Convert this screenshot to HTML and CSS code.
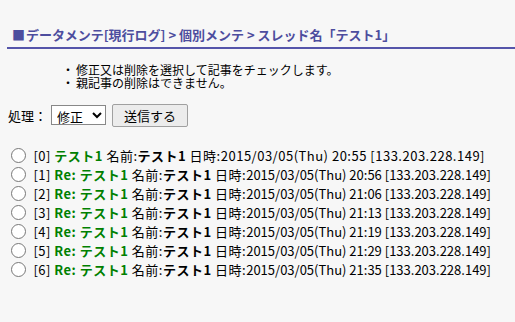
FILE: index.html
```html
<!DOCTYPE html>
<html lang="ja">
<head>
  <meta charset="UTF-8" />
  <title>データメンテ</title>
  <link rel="stylesheet" href="styles.css">
</head>
<body>
  <h1 class="title"><span class="mark">■</span>データメンテ[現行ログ] &gt; 個別メンテ &gt; スレッド名「テスト1」</h1>

  <ul class="notes">
    <li>修正又は削除を選択して記事をチェックします。</li>
    <li>親記事の削除はできません。</li>
  </ul>

  <form class="action-form">
    <div class="action-row">
      <label for="mode">処理：</label>
      <select id="mode" class="mode-select">
        <option>修正</option>
        <option>削除</option>
      </select>
      <button type="button" class="send-btn">送信する</button>
    </div>

    <div class="post-list">
      <label class="post parent"><input type="radio" name="no" value="0"> [0] <b class="subj">テスト1</b> 名前:<b>テスト1</b> 日時:<span class="date">2015/03/05(Thu) 20:55 [133.203.228.149]</span></label>
      <label class="post"><input type="radio" name="no" value="1"> [1] <b class="subj">Re: テスト1</b> 名前:<b>テスト1</b> 日時:<span class="date">2015/03/05(Thu) 20:56 [133.203.228.149]</span></label>
      <label class="post"><input type="radio" name="no" value="2"> [2] <b class="subj">Re: テスト1</b> 名前:<b>テスト1</b> 日時:<span class="date">2015/03/05(Thu) 21:06 [133.203.228.149]</span></label>
      <label class="post"><input type="radio" name="no" value="3"> [3] <b class="subj">Re: テスト1</b> 名前:<b>テスト1</b> 日時:<span class="date">2015/03/05(Thu) 21:13 [133.203.228.149]</span></label>
      <label class="post"><input type="radio" name="no" value="4"> [4] <b class="subj">Re: テスト1</b> 名前:<b>テスト1</b> 日時:<span class="date">2015/03/05(Thu) 21:19 [133.203.228.149]</span></label>
      <label class="post"><input type="radio" name="no" value="5"> [5] <b class="subj">Re: テスト1</b> 名前:<b>テスト1</b> 日時:<span class="date">2015/03/05(Thu) 21:29 [133.203.228.149]</span></label>
      <label class="post"><input type="radio" name="no" value="6"> [6] <b class="subj">Re: テスト1</b> 名前:<b>テスト1</b> 日時:<span class="date">2015/03/05(Thu) 21:35 [133.203.228.149]</span></label>
    </div>
  </form>
</body>
</html>
```

FILE: styles.css
```css
body {
  margin: 0;
  padding: 0 0 0 7px;
  background: #f7f7f7;
  color: #000;
  font-family: "Noto Sans CJK JP", "Noto Sans", sans-serif;
  font-size: 12px;
}

.title {
  margin: 26px 0 0;
  padding: 0 0 3px 5px;
  border-bottom: 2px solid #5555aa;
  color: #4d4d9e;
  font-size: 13px;
  font-weight: bold;
  line-height: 18px;
}

.title .mark {
  margin-right: 1px;
}

.notes {
  margin: 14px 0 0;
  padding: 0 0 0 55px;
  list-style: none;
  line-height: 13px;
}

.notes li {
  height: 13px;
}

.notes li::before {
  content: "・";
  display: inline-block;
  width: 14px;
}

.action-form {
  margin: 0;
}

.action-row {
  display: flex;
  align-items: center;
  margin-top: 14px;
  height: 24px;
}

.action-row label {
  margin-left: 1px;
  width: 43px;
  font-size: 13px;
}

.mode-select {
  width: 55px;
  height: 20px;
  font-family: inherit;
  font-size: 13px;
  background: #fff;
  border: 1px solid #888;
  border-radius: 0;
  padding: 0 1px;
}

.send-btn {
  margin-left: 6px;
  width: 76px;
  height: 23px;
  font-family: inherit;
  font-size: 13px;
  background: #ececec;
  border: 1px solid #a0a0a0;
  border-radius: 2px;
}

.post-list {
  margin-top: 19px;
  display: flex;
  flex-direction: column;
  font-size: 13px;
  letter-spacing: 0.5px;
}

.post {
  display: flex;
  align-items: center;
  height: 19px;
  white-space: pre;
}

.post input {
  margin: 0 4px 0 4px;
  width: 15px;
  height: 15px;
}

.post .date {
  letter-spacing: 0;
}

.post.parent .date {
  letter-spacing: 0.5px;
}

.subj {
  color: #008000;
}
```
